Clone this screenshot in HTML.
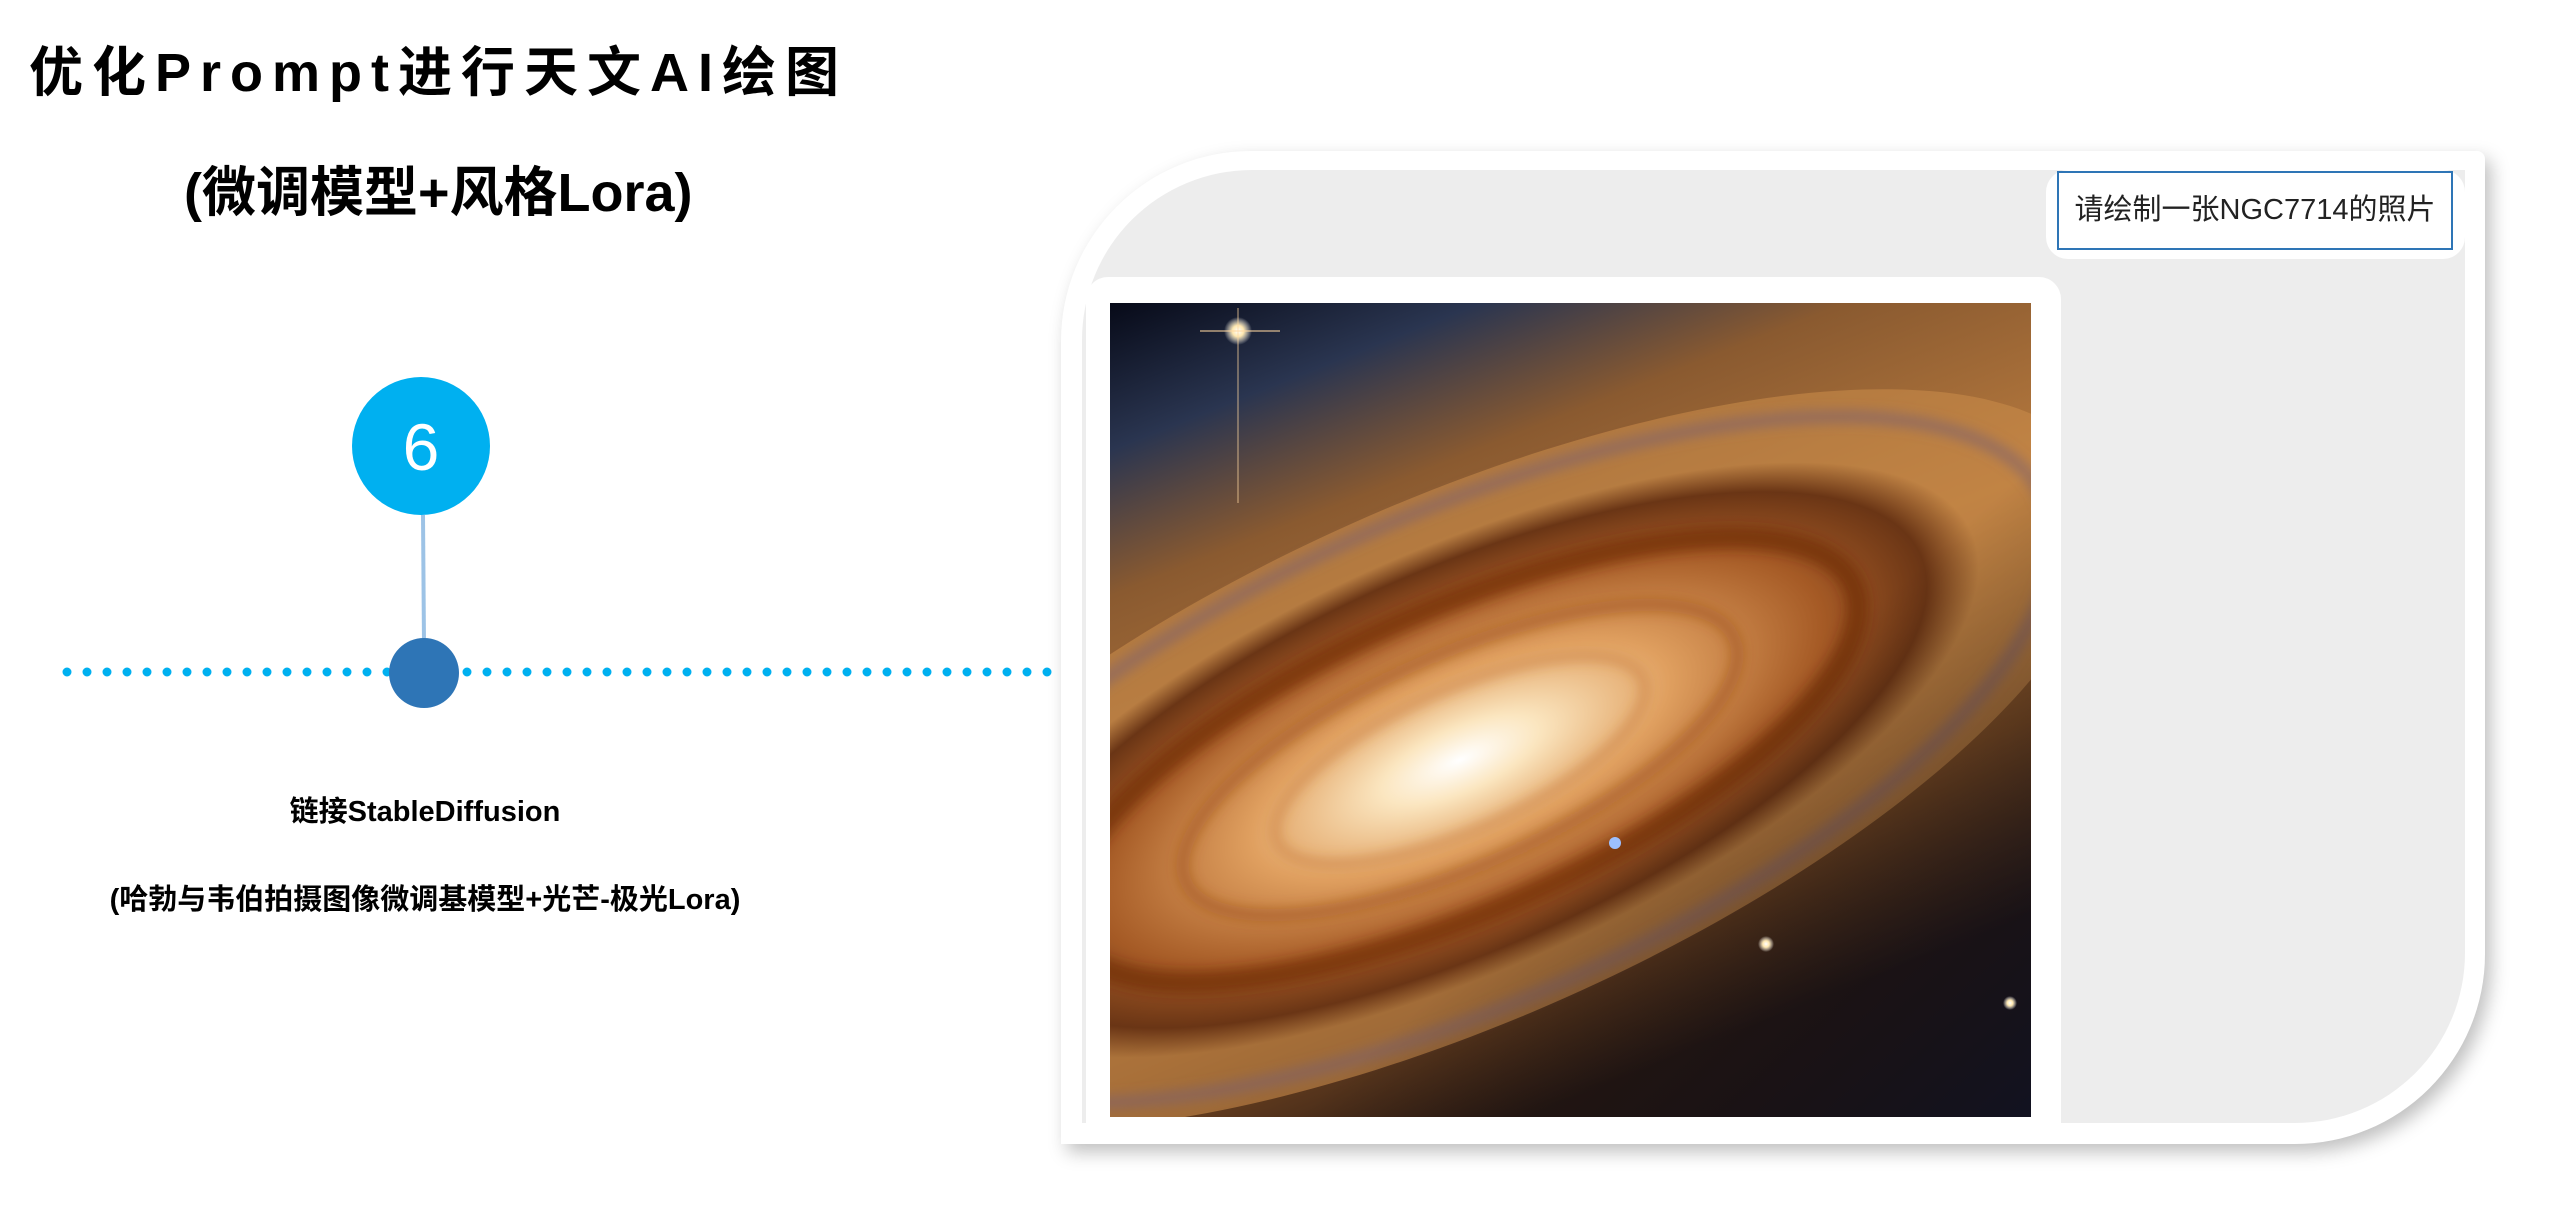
<!DOCTYPE html>
<html><head><meta charset="utf-8"><style>
html,body{margin:0;padding:0;background:#fff;overflow:hidden;width:2552px;height:1205px;}
body{position:relative;font-family:"Liberation Sans","Noto Sans CJK SC",sans-serif;}
.abs{position:absolute;}
.title{left:29px;top:38px;font-size:54px;font-weight:bold;letter-spacing:9px;color:#000;white-space:nowrap;line-height:70px;}
.sub{left:184px;top:158px;font-size:54px;font-weight:bold;color:#000;white-space:nowrap;line-height:70px;}
.t1{left:230px;top:788px;width:390px;text-align:center;font-size:29px;font-weight:bold;white-space:nowrap;}
.t2{left:60px;top:876px;width:730px;text-align:center;font-size:29px;font-weight:bold;white-space:nowrap;}
</style></head><body>
<div class="abs title">优化Prompt进行天文AI绘图</div>
<div class="abs sub">(微调模型+风格Lora)</div>

<svg class="abs" style="left:0;top:0" width="1070" height="1205">
  <line x1="67" y1="672" x2="1060" y2="672" stroke="#00b0f0" stroke-width="9" stroke-linecap="round" stroke-dasharray="0 20"/>
  <line x1="423" y1="515" x2="424" y2="645" stroke="#9dc3e6" stroke-width="4"/>
  <circle cx="421" cy="446" r="69" fill="#00b0f0"/>
  <text x="421" y="470" text-anchor="middle" font-family="Liberation Sans" font-size="66" fill="#fff">6</text>
  <circle cx="424" cy="673" r="35" fill="#2e75b6"/>
</svg>
<div class="abs t1">链接StableDiffusion</div>
<div class="abs t2">(哈勃与韦伯拍摄图像微调基模型+光芒-极光Lora)</div>

<div class="abs" style="left:1061px;top:151px;width:1424px;height:993px;background:#fff;border-radius:190px 8px 190px 0;box-shadow:6px 8px 18px rgba(0,0,0,0.25);"></div>
<div class="abs" style="left:1082px;top:170px;width:1383px;height:953px;background:#ededed;border-radius:170px 0 170px 0;"></div>
<div class="abs" style="left:1086px;top:277px;width:975px;height:846px;background:#fff;border-radius:22px 22px 0 0;"></div>
<div class="abs" style="left:2046px;top:170px;width:419px;height:89px;background:#fff;border-radius:22px;"></div>
<div class="abs" style="left:2057px;top:171px;width:392px;height:75px;border:2px solid #2e75b6;background:#fff;font-size:29px;color:#222;line-height:75px;text-align:center;white-space:nowrap;">请绘制一张NGC7714的照片</div>

<svg class="abs" style="left:1110px;top:303px" width="921" height="814" viewBox="0 0 921 814">
 <defs>
  <linearGradient id="bg" x1="0" y1="0" x2="0.45" y2="1">
   <stop offset="0" stop-color="#070a18"/>
   <stop offset="0.15" stop-color="#2a3550"/>
   <stop offset="0.3" stop-color="#8a5a30"/>
   <stop offset="0.55" stop-color="#b77a3e"/>
   <stop offset="0.8" stop-color="#7a4a22"/>
   <stop offset="1" stop-color="#2a1a14"/>
  </linearGradient>
  <radialGradient id="gal" cx="0.5" cy="0.5" r="0.5">
   <stop offset="0" stop-color="#ffffff"/>
   <stop offset="0.15" stop-color="#fbe6c0"/>
   <stop offset="0.4" stop-color="#e0a060"/>
   <stop offset="0.7" stop-color="#a55a25"/>
   <stop offset="0.9" stop-color="#6a3515"/>
   <stop offset="1" stop-color="#6a3515" stop-opacity="0"/>
  </radialGradient>
  <radialGradient id="star" cx="0.5" cy="0.5" r="0.5">
   <stop offset="0" stop-color="#fff"/><stop offset="0.4" stop-color="#ffe8b0"/><stop offset="1" stop-color="#fff" stop-opacity="0"/>
  </radialGradient>
  <linearGradient id="bot" x1="0" y1="0" x2="1" y2="1">
   <stop offset="0.6" stop-color="#000" stop-opacity="0"/>
   <stop offset="1" stop-color="#0a0f25" stop-opacity="0.75"/>
  </linearGradient>
  <filter id="bl"><feGaussianBlur stdDeviation="6"/></filter>
 </defs>
 <rect width="921" height="814" fill="url(#bg)"/>
 <g transform="rotate(-24 350 457)">
  <ellipse cx="350" cy="457" rx="700" ry="260" fill="#c88a4a" opacity="0.6"/>
  <ellipse cx="350" cy="457" rx="560" ry="210" fill="url(#gal)"/>
  <g filter="url(#bl)">
  <ellipse cx="350" cy="457" rx="430" ry="150" fill="none" stroke="#6a2808" stroke-width="22" opacity="0.6"/>
  <ellipse cx="350" cy="457" rx="300" ry="105" fill="none" stroke="#9a4a1a" stroke-width="12" opacity="0.5"/>
  <ellipse cx="350" cy="457" rx="200" ry="70" fill="none" stroke="#c07030" stroke-width="8" opacity="0.5"/>
  <ellipse cx="350" cy="457" rx="640" ry="245" fill="none" stroke="#7a6070" stroke-width="12" opacity="0.6"/>
  </g>
 </g>
 <rect width="921" height="814" fill="url(#bot)"/>
 <circle cx="128" cy="28" r="14" fill="url(#star)"/>
 <line x1="90" y1="28" x2="170" y2="28" stroke="#ffd8a0" stroke-width="1.5" opacity="0.7"/>
 <line x1="128" y1="5" x2="128" y2="200" stroke="#ffd8a0" stroke-width="1.5" opacity="0.5"/>
 <circle cx="656" cy="641" r="8" fill="url(#star)"/>
 <circle cx="900" cy="700" r="7" fill="url(#star)"/>
 <circle cx="505" cy="540" r="6" fill="#9cc0ff"/>
</svg>
</body></html>
